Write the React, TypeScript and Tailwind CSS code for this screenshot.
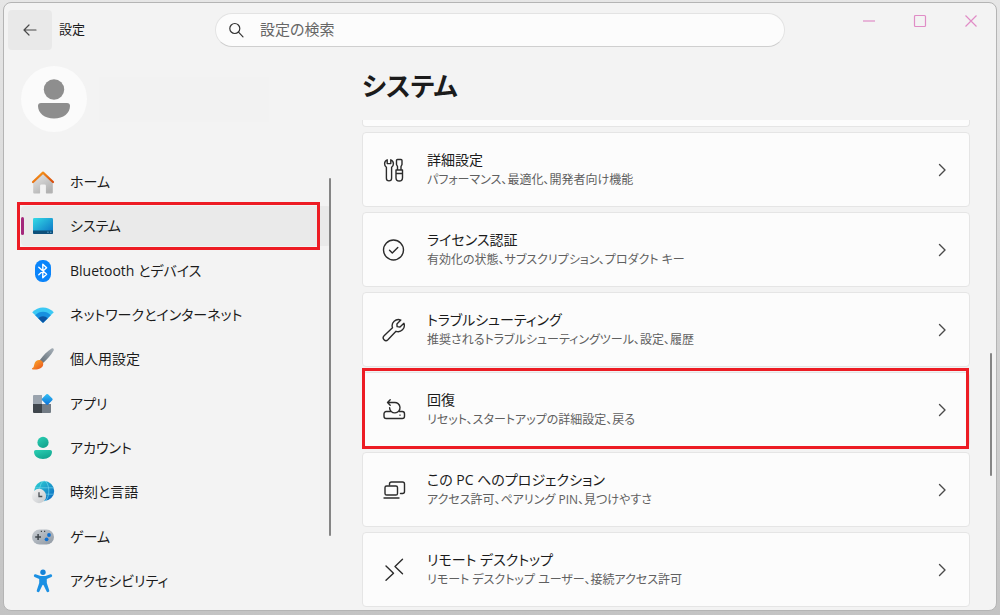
import type { ReactNode } from "react";

function HomeIcon() {
  return (
    <svg viewBox="0 0 24 24" className="size-6" aria-hidden="true">
      <defs>
        <linearGradient id="homeBody" x1="0" y1="0" x2="0.6" y2="1">
          <stop offset="0" stopColor="#e8e8e8" />
          <stop offset="1" stopColor="#b3b3b3" />
        </linearGradient>
        <linearGradient id="homeRoof" x1="0" y1="0" x2="1" y2="1">
          <stop offset="0" stopColor="#fba11b" />
          <stop offset="1" stopColor="#d84a0c" />
        </linearGradient>
      </defs>
      <path
        d="M12 3.2 2.2 12.5V22.4a1 1 0 0 0 1 1H8.500a.6.6 0 0 0 .6-.6V15.800a1.200 1.200 0 0 1 1.200-1.200H13.700a1.200 1.200 0 0 1 1.200 1.200V22.800a.6.6 0 0 0 .6.6H20.800a1 1 0 0 0 1-1V12.500Z"
        fill="url(#homeBody)"
      />
      <path d="M2 12 12 2.600 22 12" fill="none" stroke="url(#homeRoof)" strokeWidth="2.200" strokeLinecap="round" strokeLinejoin="round" />
    </svg>
  );
}

function SystemIcon() {
  return (
    <svg viewBox="0 0 24 24" className="size-6" aria-hidden="true">
      <defs>
        <linearGradient id="sysScreen" x1="0" y1="0" x2="1" y2="1">
          <stop offset="0" stopColor="#34dbe6" />
          <stop offset="1" stopColor="#0a6fc4" />
        </linearGradient>
      </defs>
      <rect x="2" y="4" width="20" height="16" rx="1.200" fill="url(#sysScreen)" />
      <path d="M2 16.500H22V18.800A1.200 1.200 0 0 1 20.800 20H3.200A1.200 1.200 0 0 1 2 18.800Z" fill="#0d4f7a" />
      <path d="M16.200 18.200h1.500M19 18.200h1.500" stroke="#7fc4ea" strokeWidth="0.800" />
    </svg>
  );
}

function BluetoothIcon() {
  return (
    <svg viewBox="0 0 24 24" className="size-6" aria-hidden="true">
      <rect x="4" y="1" width="16" height="22" rx="7.500" fill="#0a84fa" />
      <path d="M7.800 8.300 15.600 15.200 11.800 18.700V5.300L15.600 8.800 7.800 15.700" fill="none" stroke="#fff" strokeWidth="1.400" strokeLinejoin="round" strokeLinecap="round" />
    </svg>
  );
}

function NetworkIcon() {
  return (
    <svg viewBox="0 0 24 24" className="size-6" aria-hidden="true">
      <path d="M1.200 9.200C7.200 2.900 16.800 2.900 22.800 9.200L12.700 19.300a1 1 0 0 1-1.400 0Z" fill="#3bc8f4" />
      <path d="M4.200 12.200c4.300-4.500 11.300-4.500 15.600 0l-7.100 7.100a1 1 0 0 1-1.400 0Z" fill="#1790e0" />
      <path d="M7.300 15.300c2.600-2.700 6.800-2.700 9.400 0l-4 4a1 1 0 0 1-1.400 0Z" fill="#0c55a4" />
    </svg>
  );
}

function BrushIcon() {
  return (
    <svg viewBox="0 0 24 24" className="size-6" aria-hidden="true">
      <defs>
        <linearGradient id="brushHandle" x1="0" y1="1" x2="1" y2="0">
          <stop offset="0" stopColor="#5e6a74" />
          <stop offset="1" stopColor="#a7b0b8" />
        </linearGradient>
        <linearGradient id="brushTip" x1="0" y1="0" x2="1" y2="1">
          <stop offset="0" stopColor="#fdb12a" />
          <stop offset="1" stopColor="#e8501c" />
        </linearGradient>
      </defs>
      <path d="M8.500 13.500C12 8.600 16.500 3.800 20.600 1.500c1.600-.7 2.700.4 2 2C20.200 8 15.800 12.800 11.500 16.600Z" fill="url(#brushHandle)" />
      <path d="M8.700 13.100c2.500.3 3.700 2 3.500 4.300-.5 3.800-5 5.600-10.600 5-.9-.2-.8-.9-.1-1.300 1.500-.9 1.300-2.200 1.900-4.200.7-2.600 2.600-4 5.300-3.800Z" fill="url(#brushTip)" />
    </svg>
  );
}

function AppsIcon() {
  return (
    <svg viewBox="0 0 24 24" className="size-6" aria-hidden="true">
      <defs>
        <linearGradient id="appDiamond" x1="0" y1="0" x2="1" y2="1">
          <stop offset="0" stopColor="#35c3f5" />
          <stop offset="1" stopColor="#0b6ed6" />
        </linearGradient>
      </defs>
      <path d="M3 3H11V12H2V4a1 1 0 0 1 1-1Z" fill="#9aa3ad" />
      <path d="M2 12H11V21H3a1 1 0 0 1-1-1Z" fill="#3f464c" />
      <path d="M11 12H20V20a1 1 0 0 1-1 1H11Z" fill="#737c85" />
      <rect x="12" y="3.200" width="8.400" height="8.400" rx="1.200" transform="rotate(45 16.200 7.400)" fill="url(#appDiamond)" />
    </svg>
  );
}

function AccountIcon() {
  return (
    <svg viewBox="0 0 24 24" className="size-6" aria-hidden="true">
      <defs>
        <linearGradient id="acct" x1="0" y1="0" x2="0.600" y2="1">
          <stop offset="0" stopColor="#2bd0b4" />
          <stop offset="1" stopColor="#12a48e" />
        </linearGradient>
      </defs>
      <circle cx="12" cy="6.400" r="5.600" fill="url(#acct)" />
      <path d="M4.800 14H19.200a1.800 1.800 0 0 1 1.800 1.800C21 20 17.200 23 12 23S3 20 3 15.800A1.800 1.800 0 0 1 4.800 14Z" fill="url(#acct)" />
    </svg>
  );
}

function TimeIcon() {
  return (
    <svg viewBox="0 0 24 24" className="size-6" aria-hidden="true">
      <defs>
        <linearGradient id="globe" x1="0" y1="0" x2="1" y2="1">
          <stop offset="0" stopColor="#2fd5d2" />
          <stop offset="1" stopColor="#0a63c4" />
        </linearGradient>
        <linearGradient id="clockFace" x1="0" y1="0" x2="1" y2="1">
          <stop offset="0" stopColor="#f6f6f6" />
          <stop offset="1" stopColor="#c4c7ca" />
        </linearGradient>
      </defs>
      <circle cx="13.200" cy="11" r="10" fill="url(#globe)" />
      <path d="M4 7.800H22.500M4 14.200H22.500" stroke="#7fe0f2" strokeWidth="0.800" opacity="0.700" />
      <ellipse cx="13.200" cy="11" rx="4.600" ry="10" fill="none" stroke="#7fe0f2" strokeWidth="0.800" opacity="0.700" />
      <circle cx="8" cy="16" r="7.200" fill="url(#clockFace)" />
      <path d="M8 12.200V16.500H11.300" fill="none" stroke="#4a4f54" strokeWidth="1.300" />
    </svg>
  );
}

function GameIcon() {
  return (
    <svg viewBox="0 0 24 24" className="size-6" aria-hidden="true">
      <defs>
        <linearGradient id="pad" x1="0" y1="0" x2="1" y2="1">
          <stop offset="0" stopColor="#c9ced4" />
          <stop offset="1" stopColor="#8f98a2" />
        </linearGradient>
      </defs>
      <rect x="1" y="4.500" width="22" height="15" rx="7.500" fill="url(#pad)" />
      <path d="M4.200 12H10M7.100 9.100V14.900" stroke="#3f464c" strokeWidth="1.500" />
      <path d="M9.800 6.400h1.200M13 6.400h1.200" stroke="#3f464c" strokeWidth="1.200" />
      <circle cx="18" cy="10" r="1.900" fill="#0f6fd0" />
      <circle cx="15.600" cy="14.300" r="1.900" fill="#0f6fd0" />
    </svg>
  );
}

function AccessIcon() {
  return (
    <svg viewBox="0 0 24 24" className="size-6" aria-hidden="true">
      <circle cx="12" cy="3.200" r="2.700" fill="#1583d8" />
      <path
        d="M4.600 5.300 9.600 7.100H14.400L19.400 5.300a1.400 1.400 0 0 1 1 2.600L15.800 10.100V14L18.200 21.300a1.400 1.400 0 0 1-2.700.9L12.600 16.300a.7.7 0 0 0-1.200 0L8.500 22.200a1.400 1.400 0 0 1-2.700-.9L8.200 14V10.100L3.600 7.900a1.400 1.400 0 0 1 1-2.600Z"
        fill="#1b90e3"
      />
    </svg>
  );
}

function LineIcon({ children }: { children: ReactNode }) {
  return (
    <svg
      viewBox="0 0 24 24"
      className="size-6 shrink-0"
      fill="none"
      stroke="#2b2b2b"
      strokeWidth="1.400"
      strokeLinecap="round"
      strokeLinejoin="round"
      aria-hidden="true"
    >
      {children}
    </svg>
  );
}

const navItems: { label: string; icon: ReactNode; current?: boolean }[] = [
  { label: "ホーム", icon: <HomeIcon /> },
  { label: "システム", icon: <SystemIcon />, current: true },
  { label: "Bluetooth とデバイス", icon: <BluetoothIcon /> },
  { label: "ネットワークとインターネット", icon: <NetworkIcon /> },
  { label: "個人用設定", icon: <BrushIcon /> },
  { label: "アプリ", icon: <AppsIcon /> },
  { label: "アカウント", icon: <AccountIcon /> },
  { label: "時刻と言語", icon: <TimeIcon /> },
  { label: "ゲーム", icon: <GameIcon /> },
  { label: "アクセシビリティ", icon: <AccessIcon /> },
];

const cards: { title: string; detail: string; icon: ReactNode; marked?: boolean }[] = [
  {
    title: "詳細設定",
    detail: "パフォーマンス、最適化、開発者向け機能",
    icon: (
      <LineIcon>
        <path d="M5.200 1.800V5.600H8.800V1.800C10.500 2.500 11.400 4 11.400 5.700 11.400 7.400 10.600 8.600 9.600 9.300V20.300a2.600 2.600 0 0 1-5.200 0V9.300C3.400 8.600 2.600 7.400 2.600 5.700 2.600 4 3.500 2.500 5.200 1.800Z" />
        <path d="M15.500 12V8.500L14.500 6.500V2.500a1 1 0 0 1 1-1H19a1 1 0 0 1 1 1V6.500L19 8.500V12M14 12H20.500V19.800a3.200 3.200 0 0 1-6.500 0ZM14 15.500H20.500" />
      </LineIcon>
    ),
  },
  {
    title: "ライセンス認証",
    detail: "有効化の状態、サブスクリプション、プロダクト キー",
    icon: (
      <LineIcon>
        <circle cx="11.500" cy="12" r="10" />
        <path d="M7.500 12.200 10.300 15 15.800 9.500" />
      </LineIcon>
    ),
  },
  {
    title: "トラブルシューティング",
    detail: "推奨されるトラブルシューティングツール、設定、履歴",
    icon: (
      <LineIcon>
        <path d="M18.800 2.100A6.200 6.200 0 0 0 10.500 9.800L2.100 17.800A2.700 2.700 0 0 0 5.900 21.700L14 13.300A6.200 6.200 0 0 0 21.900 5.300L18 9 15.100 8.600 14.900 5.900Z" />
      </LineIcon>
    ),
  },
  {
    title: "回復",
    detail: "リセット、スタートアップの詳細設定、戻る",
    marked: true,
    icon: (
      <LineIcon>
        <path d="M8.500 13.500H4.200A2.200 2.200 0 0 0 2 15.700V18.300A2.200 2.200 0 0 0 4.200 20.500H20.300A2.200 2.200 0 0 0 22.500 18.300V15.700A2.200 2.200 0 0 0 20.300 13.500H17" />
        <path d="M5.500 4.500H12.200A5.200 5.200 0 1 1 7.600 9.700M8.200 1.800 5.500 4.500 8.200 7.200" />
        <path d="M17.800 17.100H18.200" />
      </LineIcon>
    ),
  },
  {
    title: "この PC へのプロジェクション",
    detail: "アクセス許可、ペアリング PIN、見つけやすさ",
    icon: (
      <LineIcon>
        <path d="M7.500 7V6A2 2 0 0 1 9.500 4H20.500A2 2 0 0 1 22.500 6V13.500A2 2 0 0 1 20.500 15.500H18.500" />
        <rect x="3" y="8" width="12.500" height="9" rx="1.600" />
        <path d="M2 20H17" />
      </LineIcon>
    ),
  },
  {
    title: "リモート デスクトップ",
    detail: "リモート デスクトップ ユーザー、接続アクセス許可",
    icon: (
      <LineIcon>
        <path d="M4 8 11.500 15.200 4 22.300M20.500 1.200 13 8.500 20.500 15.800" />
      </LineIcon>
    ),
  },
];

export default function App() {
  return (
    <div
      lang="ja"
      className="flex min-h-screen flex-col bg-gradient-to-b from-[#e6e6e6] to-[#c3c3c3] px-[3px] pt-[2px] pb-[5px] font-['Open_Sans','Noto_Sans_CJK_JP',sans-serif] text-[#1b1b1b] [font-feature-settings:'palt']"
    >
      <div className="flex flex-1 flex-col rounded-lg border border-[#b4b4b4] bg-[#f3f3f3]">
        <header className="flex h-[53px] items-center">
          <div className="flex w-[211px] shrink-0 items-center gap-[7px] pl-1">
            <button type="button" aria-label="戻る" className="flex h-10 w-11 items-center justify-center rounded bg-[#e9e9e9]">
              <svg viewBox="0 0 16 16" className="size-4" fill="none" stroke="#4a4a4a" strokeWidth="1.200" strokeLinecap="round" strokeLinejoin="round" aria-hidden="true">
                <path d="M14 8H2M7 3 2 8 7 13" />
              </svg>
            </button>
            <span className="text-[13px]">設定</span>
          </div>
          <label className="flex h-[34px] flex-1 items-center gap-4 rounded-full border border-[#e3e3e3] border-b-[#cfcfcf] bg-[#fcfcfc] px-3">
            <svg viewBox="0 0 16 16" className="size-4 shrink-0" fill="none" stroke="#333" strokeWidth="1.200" strokeLinecap="round" aria-hidden="true">
              <circle cx="6.800" cy="6.500" r="5" />
              <path d="M10.500 10.200 15 14.800" />
            </svg>
            <input
              type="search"
              aria-label="設定の検索"
              placeholder="設定の検索"
              className="min-w-0 flex-1 bg-transparent text-[15px] outline-none placeholder:text-[#666]"
            />
          </label>
          <div className="flex w-[211px] shrink-0 justify-end self-start pt-2">
            {[
              { name: "最小化", d: "M2 8H14" },
              { name: "最大化", d: "M3.500 2.500H12.500A1 1 0 0 1 13.500 3.500V12.500A1 1 0 0 1 12.500 13.500H3.500A1 1 0 0 1 2.500 12.500V3.500A1 1 0 0 1 3.500 2.500Z" },
              { name: "閉じる", d: "M2.500 2.500 13.500 13.500M13.500 2.500 2.500 13.500" },
            ].map((control) => (
              <button key={control.name} type="button" aria-label={control.name} className="flex h-5 w-[51px] items-center justify-center">
                <svg viewBox="0 0 16 16" className="size-4" fill="none" stroke="#e08cc6" strokeWidth="1.200" aria-hidden="true">
                  <path d={control.d} />
                </svg>
              </button>
            ))}
          </div>
        </header>

        <div className="flex flex-1">
          <aside className="flex w-[327px] shrink-0 flex-col">
            <div className="flex items-center gap-3 pt-[10px] pl-[17px]">
              <div className="flex size-[66px] items-center justify-center rounded-full bg-[#fbfbfb]">
                <svg viewBox="0 0 32 40" className="h-10 w-8" fill="#8e8e8e" aria-hidden="true">
                  <circle cx="16" cy="10.500" r="10.200" />
                  <path d="M3 24H29A3 3 0 0 1 32 27C32 34 25.500 39.500 16 39.500S0 34 0 27A3 3 0 0 1 3 24Z" />
                </svg>
              </div>
              <div className="h-[45px] w-[170px] bg-[#f2f2f2]" />
            </div>

            <div className="relative mt-[30px]">
              <nav aria-label="設定" className="flex min-h-[439px] flex-col justify-between pl-[17px]">
                {navItems.map((item) => (
                  <a
                    key={item.label}
                    href="#"
                    aria-current={item.current ? "page" : undefined}
                    className={
                      item.current
                        ? "relative flex h-10 items-center gap-[15px] rounded bg-[#eaeaea] pl-[10px] text-sm"
                        : "flex h-10 items-center gap-[15px] pl-[10px] text-sm"
                    }
                  >
                    {item.current && <span className="absolute top-[11px] left-0 h-[18px] w-[3px] rounded-full bg-[#a4287c]" />}
                    {item.icon}
                    <span className="whitespace-nowrap">{item.label}</span>
                    {item.current && <span className="pointer-events-none absolute -inset-y-1 right-[11px] -left-1 border-[3px] border-[#ed1c24]" />}
                  </a>
                ))}
              </nav>
              <div className="absolute top-4 right-0 h-[358px] w-0.5 rounded-full bg-[#858585]" />
            </div>
          </aside>

          <main className="relative flex min-w-0 flex-1 flex-col pr-[26px] pb-[3px] pl-[31px]">
            <h1 className="flex h-[60px] items-center text-[26px] font-bold">システム</h1>
            <div className="mt-1 mb-[5px] h-[7px] rounded-b border border-t-0 border-[#e5e5e5] bg-[#fcfcfc]" />
            <div className="flex flex-col gap-[5px]">
              {cards.map((card) => (
                <a
                  key={card.title}
                  href="#"
                  className="relative flex h-[75px] items-center rounded border border-[#e5e5e5] bg-[#fcfcfc] pr-5 pl-[19px]"
                >
                  {card.icon}
                  <span className="ml-[21px] flex min-w-0 flex-1 flex-col">
                    <span className="text-sm leading-5">{card.title}</span>
                    <span className="text-xs leading-5 text-[#606060]">{card.detail}</span>
                  </span>
                  <svg viewBox="0 0 14 14" className="size-[14px] shrink-0" fill="none" stroke="#4a4a4a" strokeWidth="1.400" strokeLinecap="round" strokeLinejoin="round" aria-hidden="true">
                    <path d="M4.500 1.500 10 7 4.500 12.500" />
                  </svg>
                  {card.marked && <span className="pointer-events-none absolute -top-[5px] right-0 -bottom-[3px] -left-px border-[3px] border-[#ed1c24]" />}
                </a>
              ))}
            </div>
            <div className="absolute top-[297px] right-1 h-[123px] w-0.5 rounded-full bg-[#858585]" />
          </main>
        </div>
      </div>
    </div>
  );
}
